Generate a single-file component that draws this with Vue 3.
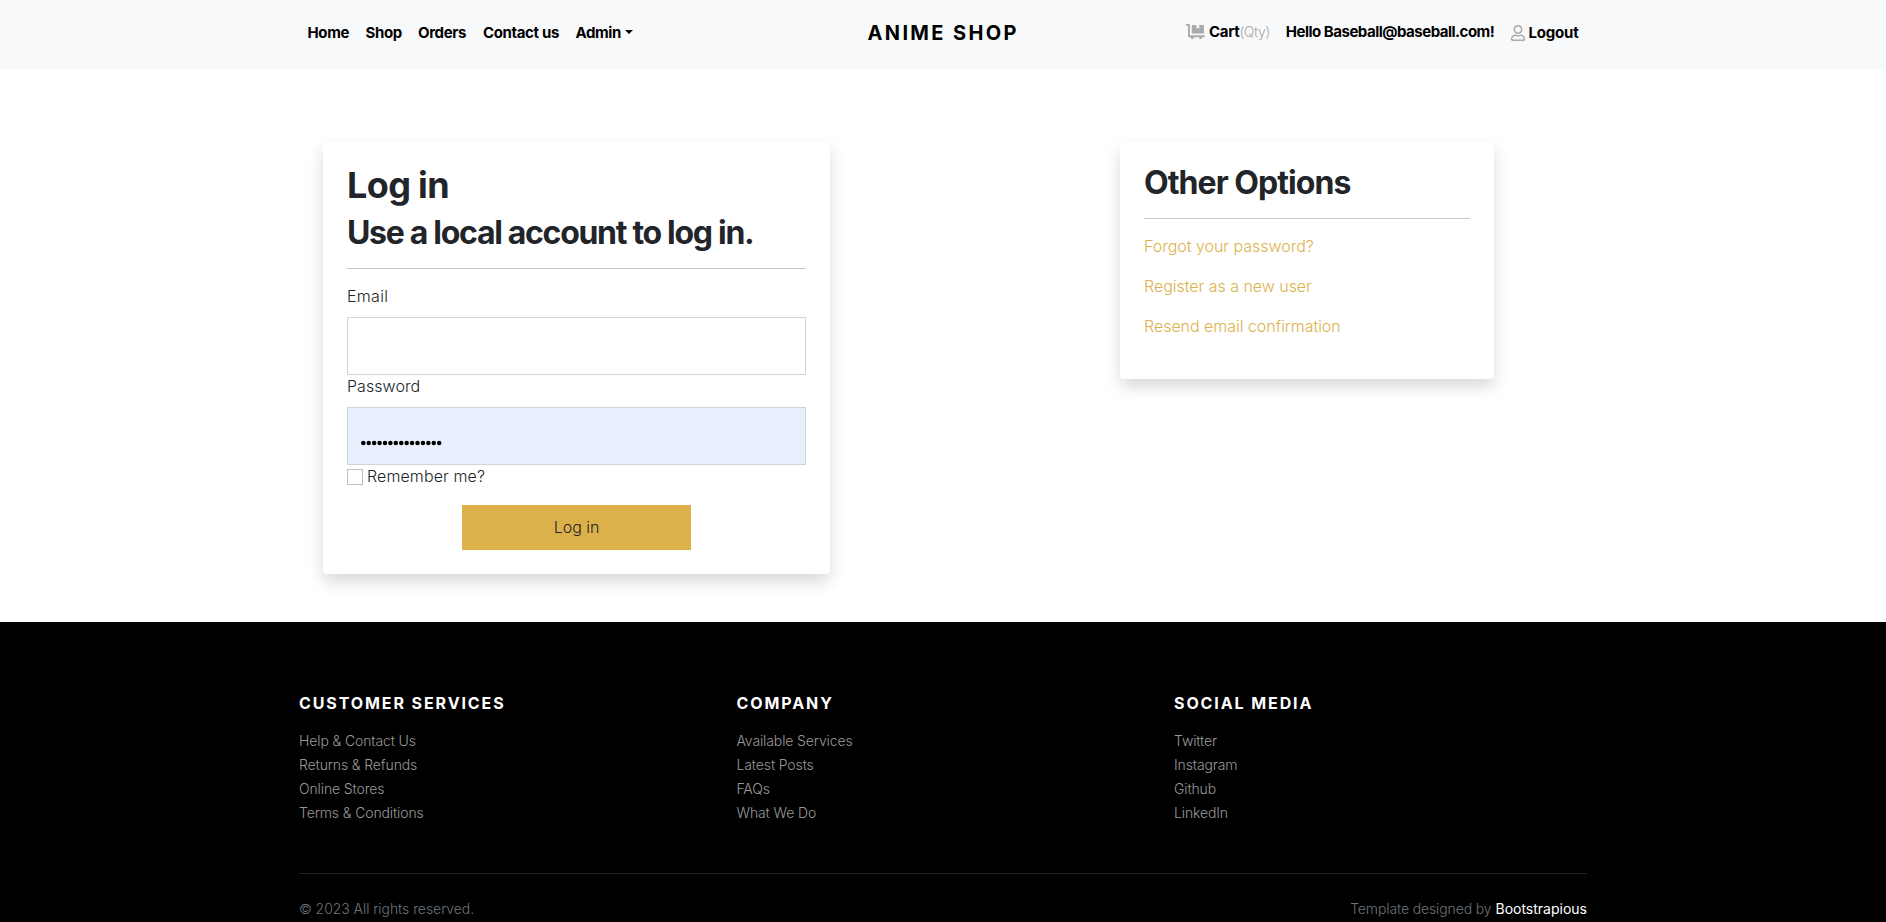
<script setup>
const links = [
  { label: 'Home', cls: 'home' },
  { label: 'Shop', cls: 'shop' },
  { label: 'Orders', cls: 'orders' },
  { label: 'Contact us', cls: 'contact' },
]
const columns = [
  { title: 'Customer services', items: ['Help & Contact Us', 'Returns & Refunds', 'Online Stores', 'Terms & Conditions'] },
  { title: 'Company', items: ['Available Services', 'Latest Posts', 'FAQs', 'What We Do'] },
  { title: 'Social media', items: ['Twitter', 'Instagram', 'Github', 'LinkedIn'] },
]
</script>

<template>
  <div class="page">
    <header class="bar">
      <div class="container nav">
        <nav class="left">
          <a v-for="l in links" :key="l.label" :class="l.cls">{{ l.label }}</a>
          <a class="admin">Admin<i class="caret"></i></a>
        </nav>
        <div class="brand">ANIME SHOP</div>
        <div class="right">
          <a class="cart">
            <svg width="19" height="15" viewBox="0 0 640 512"><path d="M208 320h384a16 16 0 0 0 16-16V48a16 16 0 0 0-16-16H448v128l-48-32-48 32V32H208a16 16 0 0 0-16 16v256a16 16 0 0 0 16 16zM624 384H128V16a16 16 0 0 0-16-16H16A16 16 0 0 0 0 16v32a16 16 0 0 0 16 16h48v368a16 16 0 0 0 16 16h82.900a48 48 0 1 0 90.200 0H451a48 48 0 1 0 90.200 0H624a16 16 0 0 0 16-16v-32a16 16 0 0 0-16-16z" /></svg>
            <b>Cart</b><small>(Qty)</small>
          </a>
          <a class="hello">Hello Baseball@baseball.com!</a>
          <a class="logout">
            <svg width="14" height="16" viewBox="0 0 448 512"><path d="M313.600 304c-28.700 0-42.500 16-89.600 16s-60.800-16-89.600-16C60.200 304 0 364.200 0 438.400V464c0 26.500 21.500 48 48 48h352c26.500 0 48-21.500 48-48v-25.600c0-74.200-60.200-134.400-134.400-134.400zM400 464H48v-25.600c0-47.600 38.800-86.400 86.400-86.400 14.600 0 38.300 16 89.600 16 51.700 0 74.900-16 89.600-16 47.600 0 86.400 38.800 86.400 86.400V464zM224 288c79.500 0 144-64.500 144-144S303.500 0 224 0 80 64.500 80 144s64.500 144 144 144zm0-240c52.900 0 96 43.100 96 96s-43.100 96-96 96-96-43.100-96-96 43.100-96 96-96z" /></svg>
            <b>Logout</b>
          </a>
        </div>
      </div>
    </header>

    <main class="container main">
      <section class="card login">
        <h1>Log in</h1>
        <h2>Use a local account to log in.</h2>
        <hr />
        <label class="email">Email</label>
        <div class="field"></div>
        <label>Password</label>
        <div class="field filled">
          <svg width="82" height="6" viewBox="0 0 82 6"><circle v-for="n in 15" :key="n" :cx="2.3 + (n - 1) * 5.42" cy="3" r="2.250" /></svg>
        </div>
        <div class="remember"><i class="check"></i><span>Remember me?</span></div>
        <button class="submit">Log in</button>
      </section>
      <section class="card options">
        <h2>Other Options</h2>
        <hr />
        <p>Forgot your password?</p>
        <p>Register as a new user</p>
        <p>Resend email confirmation</p>
      </section>
    </main>

    <footer class="footer">
      <div class="container">
        <div class="columns">
          <div v-for="c in columns" :key="c.title" class="column">
            <h6>{{ c.title }}</h6>
            <a v-for="i in c.items" :key="i">{{ i }}</a>
          </div>
        </div>
        <div class="legal">
          <span class="copy">© 2023 All rights reserved.</span>
          <span class="credit"><span>Template designed by</span> <b>Bootstrapious</b></span>
        </div>
      </div>
    </footer>
  </div>
</template>

<style scoped>
* { box-sizing: border-box; }
.page { height: 922px; overflow: hidden; display: flex; flex-direction: column; background: #fff; color: #212529; font-family: Inter, "Liberation Sans", sans-serif; font-size: 16px; font-weight: 340; line-height: 24px; }
.container { width: 1288px; margin: 0 auto; }
.bar { height: 69px; flex: none; background: #f8f9fb; }
.nav { height: 100%; display: grid; grid-template-columns: 1fr auto 1fr; align-items: center; color: #000; font-size: 15px; font-weight: 700; padding-bottom: 4px; }
.left { display: flex; padding-left: 8.500px; letter-spacing: -0.360px; white-space: nowrap; }
.home { width: 58px; }
.shop { width: 52.500px; }
.orders { width: 65px; }
.contact { width: 92.500px; }
.admin { display: flex; align-items: center; letter-spacing: -0.420px; }
.caret { border: 4px solid transparent; border-top-color: #000; border-bottom: 0; margin-left: 4px; margin-top: -2px; }
.brand { font-size: 20px; letter-spacing: 2.350px; margin-left: -1px; margin-right: -1.300px; }
.right { display: flex; justify-content: flex-end; padding-right: 8.500px; white-space: nowrap; }
.right b { font-weight: 700; }
.right svg { fill: #aaa; flex: none; }
.cart, .logout { display: flex; align-items: center; }
.cart { margin-top: -1px; margin-bottom: 1px; letter-spacing: -0.300px; }
.cart svg { margin: -1px 4px 0 0; }
.cart small { font-size: 14px; font-weight: 300; color: #aaa; letter-spacing: -0.450px; }
.hello { margin: -1px 17px 1px 16px; letter-spacing: -0.500px; }
.logout { letter-spacing: -0.180px; }
.logout svg { margin-right: 3px; }
.main { flex: none; height: 553px; padding: 72px 93px 0 24px; display: flex; justify-content: space-between; align-items: flex-start; }
.card { background: #fff; border-radius: 4px; padding: 24px; box-shadow: 0 8px 16px rgba(0, 0, 0, 0.15); }
.login { width: 507px; }
.options { width: 374px; }
h1, h2, h6, p { margin: 0; }
h1 { font-size: 36px; font-weight: 700; line-height: 40px; letter-spacing: -0.650px; }
h2 { font-size: 32px; font-weight: 700; letter-spacing: -1.300px; white-space: nowrap; }
.login h2 { line-height: 38px; margin-top: 9px; }
.options h2 { line-height: 36px; letter-spacing: -0.950px; margin-bottom: 17px; }
hr { border: 0; height: 1px; margin: 16px 0; background: #c8c9ca; }
.options hr { margin-top: 0; }
label { display: block; line-height: 22px; margin-bottom: 10px; letter-spacing: 0.060px; }
.email { letter-spacing: 0.320px; }
.field { height: 58px; border: 1px solid #ced4da; display: flex; align-items: center; }
.filled { background: #e8f0fe; padding: 14px 0 0 13px; }
.remember { display: flex; align-items: center; letter-spacing: 0.100px; }
.remember span { line-height: 22px; padding-bottom: 2px; }
.check { width: 16px; height: 16px; border: 1px solid #bfbfbf; margin-right: 4px; }
.submit { display: block; width: 229px; height: 45px; margin: 16px auto 0; padding: 0 0 2px; border: 0; background: #dcb14a; color: #212529; font: inherit; letter-spacing: -0.050px; }
.options p { color: #dcb14a; line-height: 22px; margin-bottom: 18px; letter-spacing: -0.030px; }
.footer { flex: 1; background: #000; color: #999; font-size: 14px; padding-top: 71px; }
.columns { display: grid; grid-template-columns: 437.500px 437.500px 1fr; height: 180px; }
h6 { color: #fff; font-size: 16px; font-weight: 700; line-height: 20px; letter-spacing: 1.900px; text-transform: uppercase; margin-bottom: 16px; }
.column a { display: block; letter-spacing: -0.120px; }
.legal { border-top: 1px solid #222; display: flex; justify-content: space-between; padding-top: 23px; color: #6c757d; }
.copy { letter-spacing: -0.060px; }
.credit span { letter-spacing: -0.120px; }
.credit b { color: #fff; font-weight: 400; }
</style>

<style>
body { margin: 0; }
</style>
